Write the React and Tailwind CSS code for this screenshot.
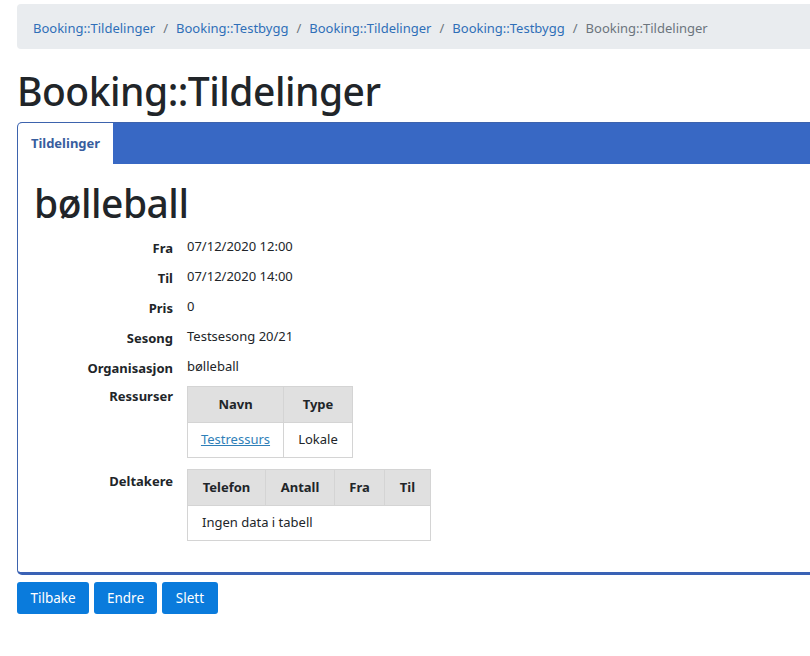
import React from 'react'

const font = { fontFamily: '"Noto Sans", "Open Sans", sans-serif' }

const crumbs = ['Booking::Tildelinger', 'Booking::Testbygg', 'Booking::Tildelinger', 'Booking::Testbygg']

const rows = [
  ['Fra', '07/12/2020 12:00'],
  ['Til', '07/12/2020 14:00'],
  ['Pris', '0'],
  ['Sesong', 'Testsesong 20/21'],
  ['Organisasjon', 'bølleball'],
]

const Th = ({ children, className = '' }) => (
  <th className={`border border-[#d4d4d4] bg-[#e0e0e0] h-[36px] px-[14px] text-[13px] font-bold text-[#212529] ${className}`}>
    {children}
  </th>
)

export default function App() {
  return (
    <div className="w-[810px] h-[656px] overflow-hidden bg-white text-[#212529]" style={font}>
      <div className="pl-[17px] pt-[4px]">
        {/* breadcrumb */}
        <nav className="h-[45px] w-[820px] bg-[#e9ecef] rounded-l-[4px] flex items-center pl-[16px] pt-[4px] text-[13px]">
          {crumbs.map((c, i) => (
            <React.Fragment key={i}>
              <a href="#" className="text-[#2f6fb8]">{c}</a>
              <span className="text-[#6c757d] px-[8px]">/</span>
            </React.Fragment>
          ))}
          <span className="text-[#6c757d]">Booking::Tildelinger</span>
        </nav>

        <h1 className="text-[39px] font-medium leading-none mt-[22px] mb-[12px] tracking-[-0.5px]">Booking::Tildelinger</h1>

        {/* card with tabs */}
        <div className="w-[820px] border border-[#3d63ad] border-b-[3px] border-b-[#3a62b5] rounded-l-[5px] overflow-hidden">
          <div className="h-[41px] bg-[#3868c4] flex">
            <div className="bg-white w-[95px] flex items-center justify-center text-[13px] font-bold text-[#385d9e] rounded-tl-[4px]">
              Tildelinger
            </div>
          </div>
          <div className="pl-[16px] pt-[19px] pb-[31px]">
            <h2 className="text-[39px] font-medium leading-none mb-[13px] tracking-[-0.5px]">bølleball</h2>
            <dl className="text-[13px]">
              {rows.map(([k, v]) => (
                <div key={k} className="flex h-[30px] items-start">
                  <dt className="w-[153px] text-right font-bold pr-[14px] pt-[4px]">{k}</dt>
                  <dd className="pt-[2px]">{v}</dd>
                </div>
              ))}
              <div className="flex mt-[1px]">
                <dt className="w-[153px] text-right font-bold pr-[14px] pt-[1px]">Ressurser</dt>
                <dd>
                  <table className="border-collapse">
                    <thead>
                      <tr>
                        <Th className="w-[96px]">Navn</Th>
                        <Th className="w-[69px]">Type</Th>
                      </tr>
                    </thead>
                    <tbody>
                      <tr>
                        <td className="border border-[#d4d4d4] h-[35px] text-center">
                          <a href="#" className="text-[#2f7fb8] underline">Testressurs</a>
                        </td>
                        <td className="border border-[#d4d4d4] h-[35px] text-center">Lokale</td>
                      </tr>
                    </tbody>
                  </table>
                </dd>
              </div>
              <div className="flex mt-[11px]">
                <dt className="w-[153px] text-right font-bold pr-[14px] pt-[3px]">Deltakere</dt>
                <dd>
                  <table className="border-collapse">
                    <thead>
                      <tr>
                        <Th className="w-[78px]">Telefon</Th>
                        <Th className="w-[69px]">Antall</Th>
                        <Th className="w-[50px]">Fra</Th>
                        <Th className="w-[46px]">Til</Th>
                      </tr>
                    </thead>
                    <tbody>
                      <tr>
                        <td colSpan={4} className="border border-[#d4d4d4] h-[35px] px-[14px]">Ingen data i tabell</td>
                      </tr>
                    </tbody>
                  </table>
                </dd>
              </div>
            </dl>
          </div>
        </div>

        <div className="flex gap-[5px] mt-[7px] text-[13.5px]">
          <button className="h-[32px] w-[72px] bg-[#0a7bdc] text-white rounded-[3px]">Tilbake</button>
          <button className="h-[32px] w-[63px] bg-[#0a7bdc] text-white rounded-[3px]">Endre</button>
          <button className="h-[32px] w-[56px] bg-[#0a7bdc] text-white rounded-[3px]">Slett</button>
        </div>
      </div>
    </div>
  )
}
